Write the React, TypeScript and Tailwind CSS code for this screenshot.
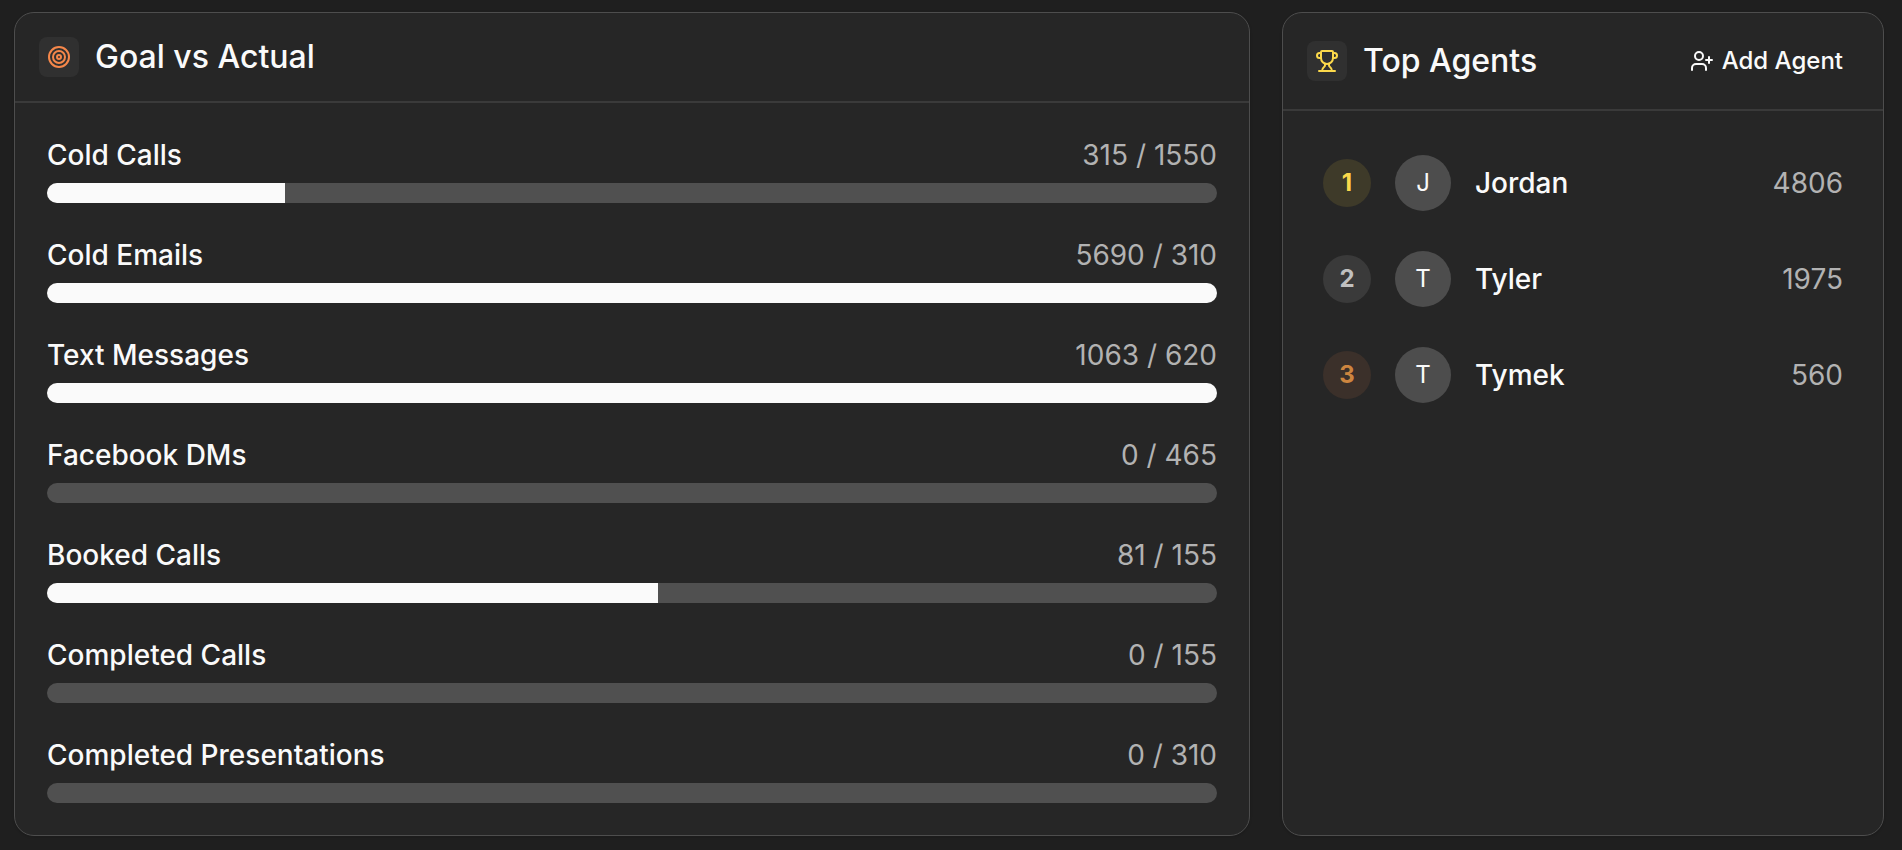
import { Target, Trophy, UserPlus } from "lucide-react";
import clsx from "clsx";

interface Goal {
  label: string;
  actual: number;
  target: number;
}

interface Agent {
  name: string;
  score: number;
}

const goals: Goal[] = [
  { label: "Cold Calls", actual: 315, target: 1550 },
  { label: "Cold Emails", actual: 5690, target: 310 },
  { label: "Text Messages", actual: 1063, target: 620 },
  { label: "Facebook DMs", actual: 0, target: 465 },
  { label: "Booked Calls", actual: 81, target: 155 },
  { label: "Completed Calls", actual: 0, target: 155 },
  { label: "Completed Presentations", actual: 0, target: 310 },
];

const agents: Agent[] = [
  { name: "Jordan", score: 4806 },
  { name: "Tyler", score: 1975 },
  { name: "Tymek", score: 560 },
];

const rankStyles = [
  "bg-[#3e3a29] text-[#fcd94b]",
  "bg-[#3a3a3a] text-[#c0c0c0]",
  "bg-[#3b302a] text-[#cd853f]",
];

const GoalRow = ({ label, actual, target }: Goal) => {
  const percent = Math.min((actual / target) * 100, 100);

  return (
    <li className="flex flex-col gap-2">
      <div className="flex items-center justify-between text-[28px] leading-10">
        <span className="font-medium">{label}</span>
        <span className="text-[#b2b2b2]">
          {actual} / {target}
        </span>
      </div>
      <div
        role="progressbar"
        aria-label={label}
        aria-valuenow={Math.round(percent)}
        className="h-5 overflow-hidden rounded-full bg-[#505050]"
      >
        <div className="h-full bg-neutral-50" style={{ width: `${percent}%` }} />
      </div>
    </li>
  );
};

const AgentRow = ({ agent, rank }: { agent: Agent; rank: number }) => (
  <li className="flex items-center gap-6 px-4 py-3">
    <span
      className={clsx(
        "flex size-12 items-center justify-center rounded-full text-2xl font-bold",
        rankStyles[rank - 1]
      )}
    >
      {rank}
    </span>
    <span className="flex size-14 items-center justify-center rounded-full bg-[#4d4d4d] text-2xl">
      {agent.name[0]}
    </span>
    <span className="flex-1 text-[28px] leading-10 font-medium">{agent.name}</span>
    <span className="text-[28px] leading-10 text-[#b2b2b2]">{agent.score}</span>
  </li>
);

export default function App() {
  return (
    <main className="grid min-h-screen grid-cols-3 content-start gap-8 bg-[#1f1f1f] pt-3 pr-[18px] pb-3 pl-[14px] font-[Inter,sans-serif] text-neutral-50">
      <section className="col-span-2 rounded-[20px] border border-[#4d4d4d] bg-[#262626] shadow-sm">
        <div className="flex items-center gap-4 border-b-2 border-[#3a3a3a] p-6">
          <div className="rounded-lg bg-[#303030] p-2">
            <Target className="size-6 text-[#f6874a]" />
          </div>
          <h2 className="text-[32px] leading-10 font-medium">Goal vs Actual</h2>
        </div>
        <ul className="flex flex-col gap-8 p-8">
          {goals.map((goal) => (
            <GoalRow key={goal.label} {...goal} />
          ))}
        </ul>
      </section>

      <section className="rounded-[20px] border border-[#4d4d4d] bg-[#262626] shadow-sm">
        <div className="flex items-center justify-between border-b-2 border-[#3a3a3a] p-6">
          <div className="flex items-center gap-4">
            <div className="rounded-lg bg-[#303030] p-2">
              <Trophy className="size-6 text-[#fcd94b]" />
            </div>
            <h2 className="text-[32px] leading-10 font-medium">Top Agents</h2>
          </div>
          <button
            type="button"
            className="flex h-12 items-center gap-2 rounded-lg px-4 text-2xl font-medium"
          >
            <UserPlus className="size-6" />
            Add Agent
          </button>
        </div>
        <ul className="flex flex-col gap-4 px-6 py-8">
          {agents.map((agent, i) => (
            <AgentRow key={agent.name} agent={agent} rank={i + 1} />
          ))}
        </ul>
      </section>
    </main>
  );
}
